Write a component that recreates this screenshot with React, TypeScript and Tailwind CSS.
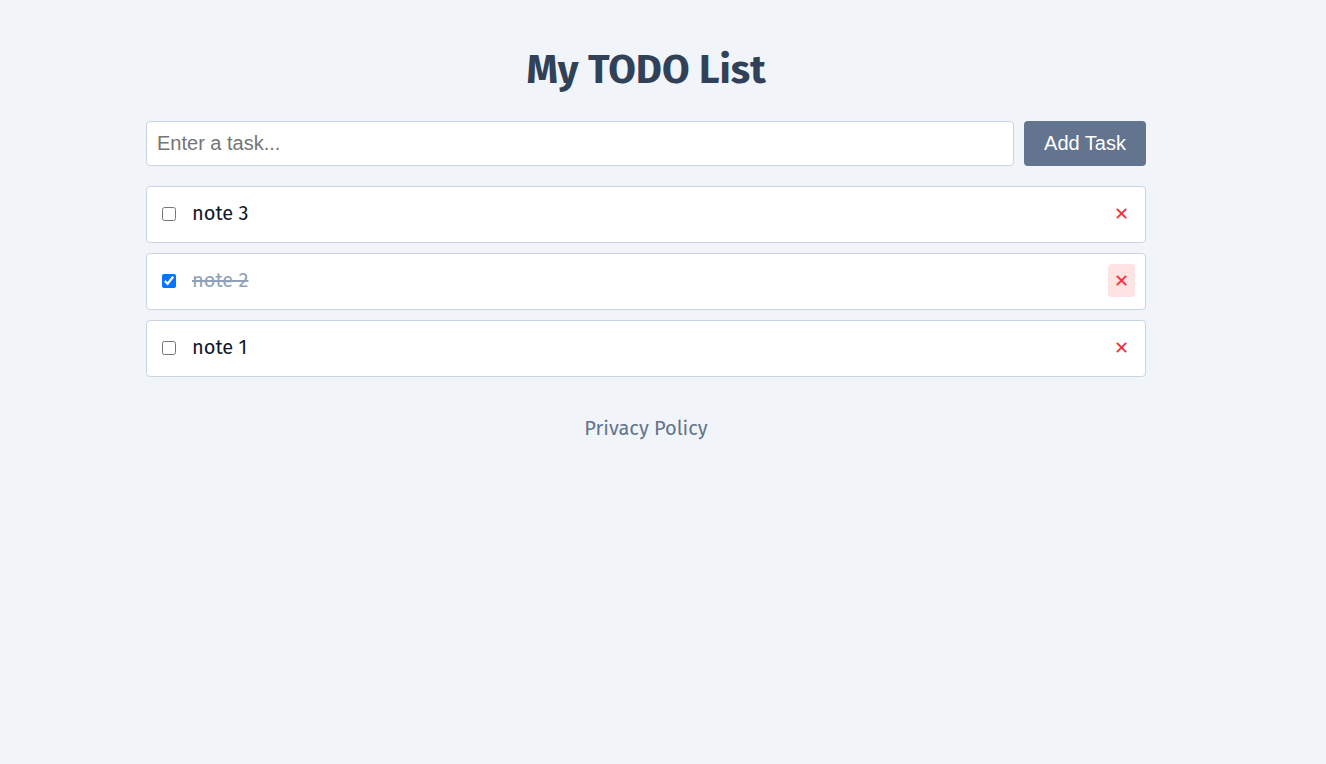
import * as React from 'react';

type Task = { id: number; text: string; done: boolean };

const initial: Task[] = [
	{ id: 3, text: 'note 3', done: false },
	{ id: 2, text: 'note 2', done: true },
	{ id: 1, text: 'note 1', done: false },
];

function TaskItem({
	task,
	hovered,
	onToggle,
	onDelete,
}: {
	task: Task;
	hovered?: boolean;
	onToggle: () => void;
	onDelete: () => void;
}) {
	return (
		<li className="flex items-center gap-4 rounded border border-slate-300 bg-white pb-[12px] pl-[15px] pr-[10px] pt-[10px]">
			<input
				type="checkbox"
				checked={task.done}
				onChange={onToggle}
				className="m-0 h-[14px] w-[14px] shrink-0"
			/>
			<span
				className={
					task.done
						? 'mb-[1px] flex-1 text-[20px] leading-7 text-slate-400 line-through'
						: 'mb-[1px] flex-1 text-[20px] leading-7 text-slate-900'
				}
			>
				{task.text}
			</span>
			<button
				onClick={onDelete}
				className={
					hovered
						? 'flex h-[33px] w-[27px] items-center justify-center rounded bg-red-100 text-lg text-red-500'
						: 'flex h-[33px] w-[27px] items-center justify-center rounded text-lg text-red-500 hover:bg-red-100'
				}
			>
				✕
			</button>
		</li>
	);
}

export default function App() {
	const [tasks, setTasks] = React.useState<Task[]>(initial);
	const [text, setText] = React.useState('');

	const add = () => {
		if (!text.trim()) return;
		setTasks([{ id: Date.now(), text: text.trim(), done: false }, ...tasks]);
		setText('');
	};

	return (
		<div className="min-h-screen bg-slate-100 font-['Fira_Sans','Noto_Sans',sans-serif]">
			<div className="ml-[146px] flex w-[1000px] flex-col pt-[40px]">
				<h1 className="text-center text-[40px] font-bold leading-[60px] text-slate-700">
					My TODO List
				</h1>
				<div className="mt-[21px] flex gap-[10px]">
					<input
						value={text}
						onChange={(e) => setText(e.target.value)}
						onKeyDown={(e) => e.key === 'Enter' && add()}
						placeholder="Enter a task..."
						className="h-[45px] flex-1 rounded border border-slate-300 bg-white px-[10px] font-['Liberation_Sans',Arial,sans-serif] text-[20px] text-slate-900 outline-none placeholder:text-[#757575]"
					/>
					<button
						onClick={add}
						className="h-[45px] w-[122px] rounded bg-slate-500 pb-[2px] font-['Liberation_Sans',Arial,sans-serif] text-[20px] text-white"
					>
						Add Task
					</button>
				</div>
				<ul className="mt-[20px] flex flex-col gap-[10px]">
					{tasks.map((t) => (
						<TaskItem
							key={t.id}
							task={t}
							hovered={t.id === 2}
							onToggle={() =>
								setTasks(
									tasks.map((x) => (x.id === t.id ? { ...x, done: !x.done } : x)),
								)
							}
							onDelete={() => setTasks(tasks.filter((x) => x.id !== t.id))}
						/>
					))}
				</ul>
				<footer className="mt-[37px] text-center text-[20px] leading-7 text-slate-500">
					<a href="#">Privacy Policy</a>
				</footer>
			</div>
		</div>
	);
}
